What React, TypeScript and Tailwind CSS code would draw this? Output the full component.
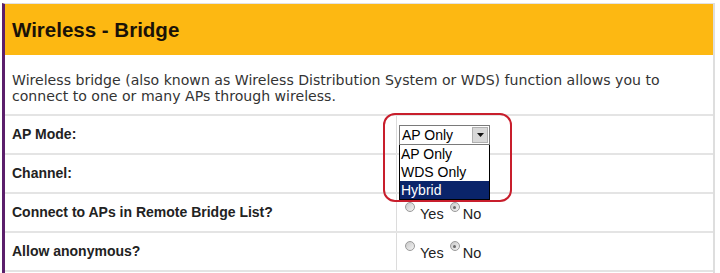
const rows = [
  { label: 'AP Mode:', kind: 'select' },
  { label: 'Channel:', kind: 'none' },
  { label: 'Connect to APs in Remote Bridge List?', kind: 'radio' },
  { label: 'Allow anonymous?', kind: 'radio' },
]

function Radio({ checked }: { checked?: boolean }) {
  return (
    <span className="relative inline-block h-[10px] w-[10px] rounded-full border border-[#9a9a9a] bg-gradient-to-br from-[#c8c8c8] to-[#f4f4f4] align-top">
      {checked && <span className="absolute left-[2.5px] top-[2.5px] h-[3px] w-[3px] rounded-full bg-[#6a6a6a]" />}
    </span>
  )
}

function YesNo() {
  return (
    <div className="flex items-start pl-[8px] pt-[1px] text-[14.5px] text-[#222] font-['Liberation_Sans',Arial,sans-serif]">
      <Radio />
      <span className="ml-[5px] mt-[5px] leading-none">Yes</span>
      <span className="ml-[6px]"><Radio checked /></span>
      <span className="ml-[3px] mt-[5px] leading-none">No</span>
    </div>
  )
}

export default function App() {
  return (
    <div className="h-[273px] w-[720px] overflow-hidden bg-white">
      <div className="relative ml-[2px] mt-[3px] h-[270px] w-[713px] border-l-[3px] border-l-[#5b1f6b] border-r-2 border-r-[#dedede] border-t border-t-[#e2e2e2]">
        <div className="flex h-[51px] items-center bg-[#fdb812] pl-[7px]">
          <h1 className="pt-[1px] text-[20.5px] font-bold text-[#1a1208] font-['Liberation_Sans',Arial,sans-serif]">
            Wireless - Bridge
          </h1>
        </div>
        <p className="border-b-2 border-b-[#e4e4e4] px-[7px] pb-[10px] pt-[17px] text-[14.1px] leading-[16px] text-[#333] font-['DejaVu_Sans',Verdana,sans-serif]">
          Wireless bridge (also known as Wireless Distribution System or WDS) function allows you to
          <br />
          connect to one or many APs through wireless.
        </p>
        {rows.map((r) => (
          <div key={r.label} className="grid h-[39px] grid-cols-[391px_1fr] border-b-2 border-b-[#e4e4e4]">
            <div className="flex items-center pl-[7px] text-[14px] font-bold text-[#222] font-['Liberation_Sans',Arial,sans-serif]">
              {r.label}
            </div>
            <div className="flex items-center border-l border-l-[#dcdcdc]">
              {r.kind === 'radio' && <YesNo />}
            </div>
          </div>
        ))}

        {/* opened select */}
        <div className="absolute left-[394px] top-[121px] w-[91px] font-['Liberation_Sans',Arial,sans-serif] text-[14px] text-black">
          <div className="flex h-[20px] items-center border border-[#7a7a7a] bg-white">
            <span className="flex-1 pl-[2px] leading-none">AP Only</span>
            <span className="mr-[1px] flex h-[16px] w-[16px] items-center justify-center border border-[#b0b0b0] bg-[#d8d8d8]">
              <svg width="7" height="4" viewBox="0 0 7 4"><path d="M0 0h7L3.5 4z" fill="#111" /></svg>
            </span>
          </div>
          <div className="border border-t-0 border-black bg-white leading-[18px]">
            <div className="pl-[1px]">AP Only</div>
            <div className="pl-[1px]">WDS Only</div>
            <div className="bg-[#0a246a] pl-[1px] text-white">Hybrid</div>
          </div>
        </div>

        <div className="pointer-events-none absolute left-[378px] top-[109px] h-[89px] w-[129px] rounded-[12px] border-2 border-[#c81e2c]" />
      </div>
    </div>
  )
}
